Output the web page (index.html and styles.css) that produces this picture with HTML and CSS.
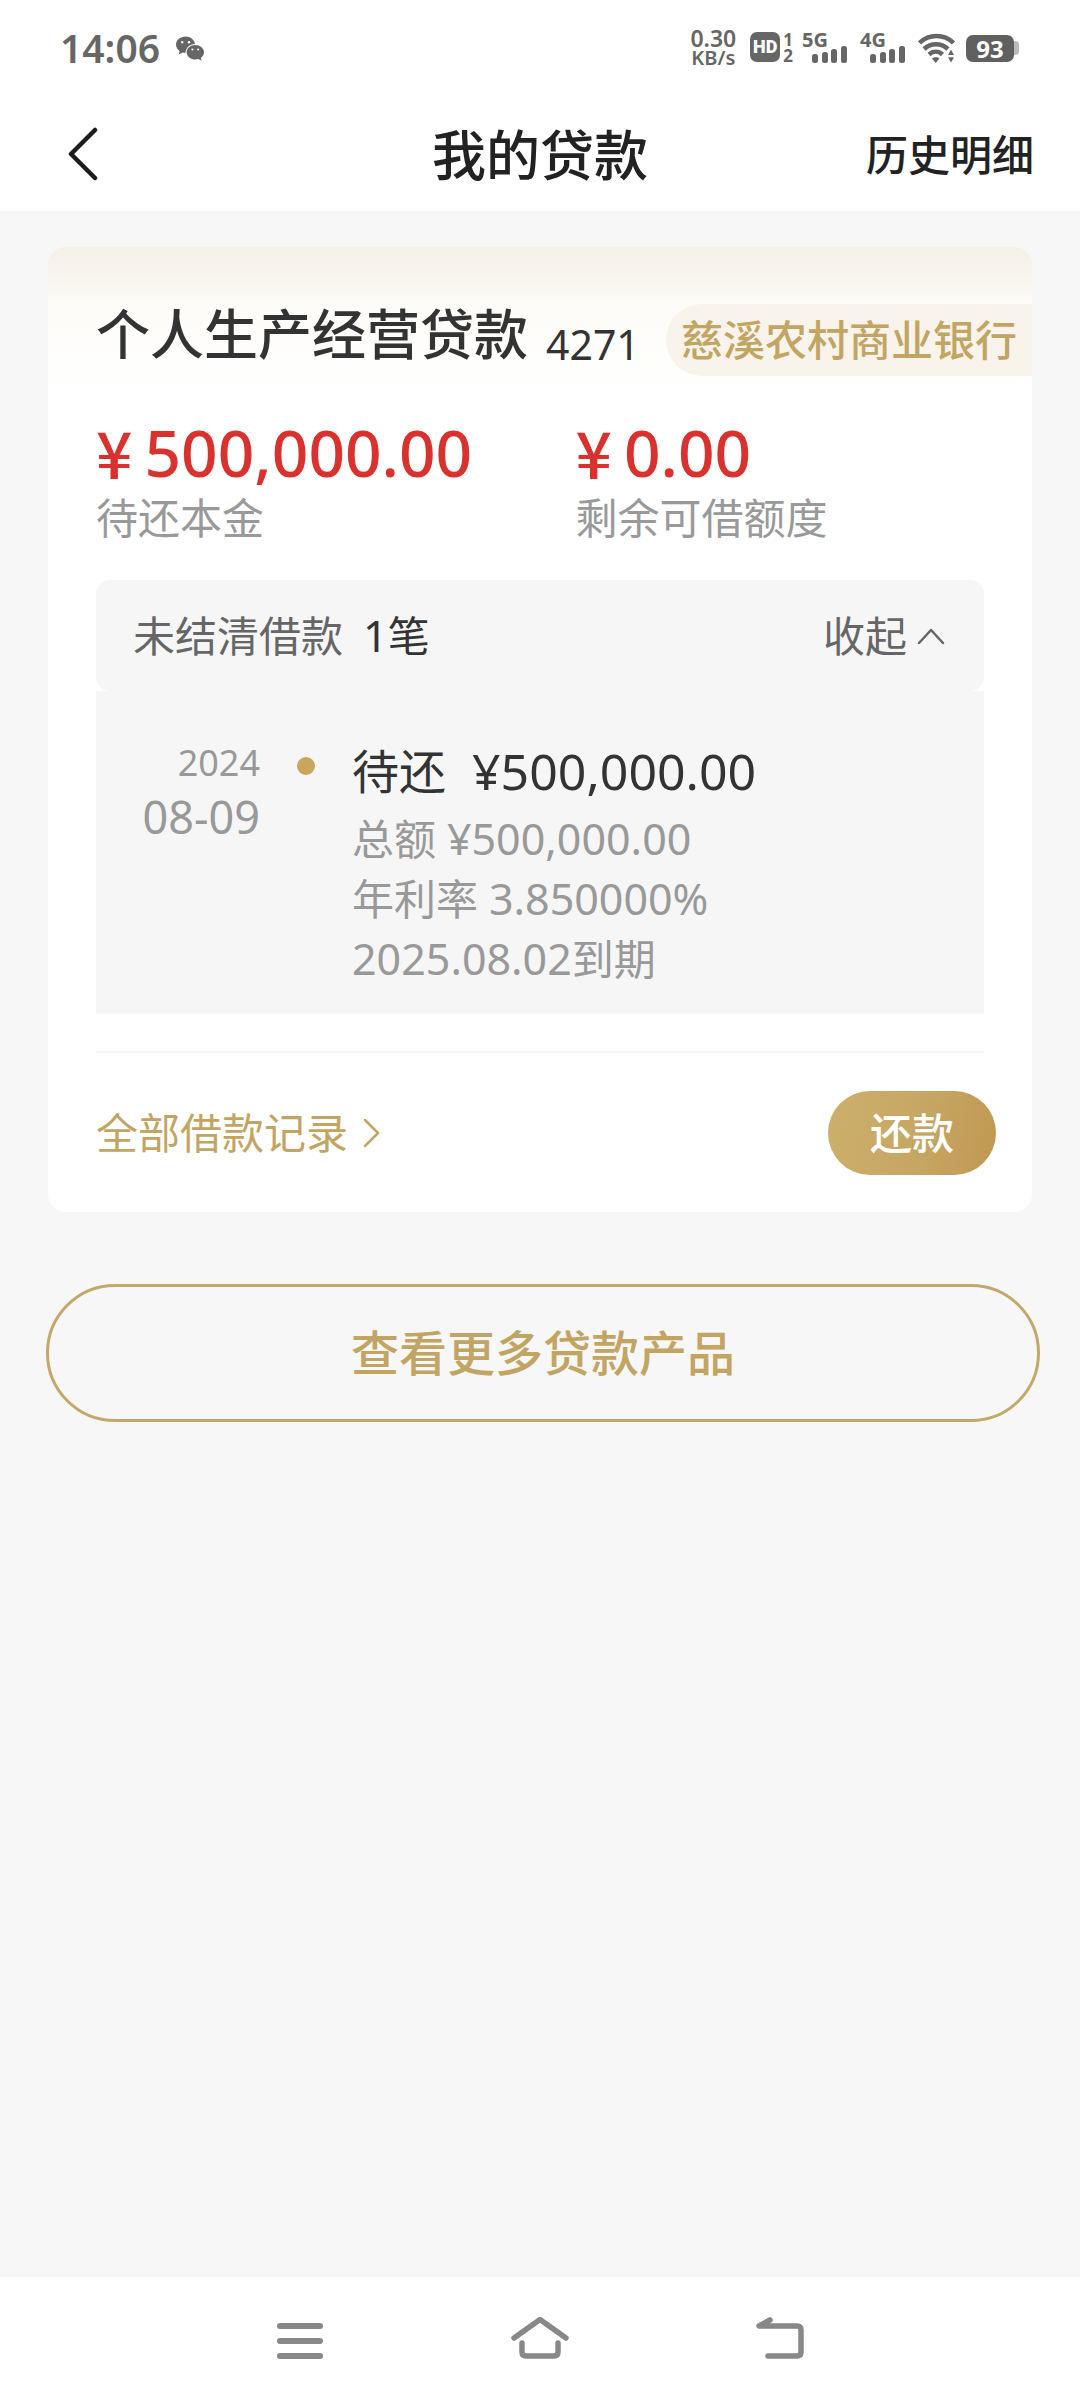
FILE: index.html
```html
<!DOCTYPE html>
<html lang="zh-CN">
<head>
<meta charset="utf-8">
<meta name="viewport" content="width=device-width, initial-scale=1">
<title>我的贷款</title>
<link rel="stylesheet" href="styles.css">
</head>
<body>
<div class="status-bar">
  <div class="status-left">
    <span class="clock">14:06</span>
    <svg class="wechat" width="28" height="25" viewBox="0 0 28 25" aria-hidden="true">
      <path d="M9.500 .5C4.300.500 0 4.100 0 8.600c0 2.600 1.400 4.900 3.600 6.400L2.800 18.500l4.200-2.100c.8.200 1.700.300 2.500.3C9.800 11.500 14 7.800 19 7.900 18.300 3.700 14.300.500 9.500.500z" fill="#666"/>
      <path d="M19.300 8.900c-4.900 0-8.700 3.300-8.700 7.300s3.900 7.300 8.700 7.300c1 0 2-.200 2.900-.4l3.500 1.700-.9-2.900c2-1.300 3.200-3.400 3.200-5.700 0-4-3.900-7.300-8.700-7.300z" fill="#666"/>
      <g fill="#fff"><circle cx="6.200" cy="6.300" r="1.200"/><circle cx="13" cy="6.300" r="1.200"/><circle cx="16.400" cy="13.500" r="1"/><circle cx="22.200" cy="13.500" r="1"/></g>
    </svg>
  </div>
  <div class="status-right">
    <div class="speed"><span>0.30</span><span class="speed-unit">KB/s</span></div>
    <div class="hd"><span class="hd-box">HD</span><span class="hd-nums"><span>1</span><span>2</span></span></div>
    <div class="signal"><span>5G</span>
      <svg width="36" height="17" viewBox="0 0 36 17" fill="#666" aria-hidden="true"><rect y="8" width="6" height="9" rx="2.500"/><rect x="10" y="6" width="6" height="11" rx="2.500"/><rect x="19" y="3" width="6" height="14" rx="2.500"/><rect x="29" width="6" height="17" rx="2.500"/></svg>
    </div>
    <div class="signal"><span>4G</span>
      <svg width="36" height="17" viewBox="0 0 36 17" fill="#666" aria-hidden="true"><rect y="8" width="6" height="9" rx="2.500"/><rect x="10" y="6" width="6" height="11" rx="2.500"/><rect x="19" y="3" width="6" height="14" rx="2.500"/><rect x="29" width="6" height="17" rx="2.500"/></svg>
    </div>
    <svg class="wifi" width="37" height="30" viewBox="0 0 37 30" aria-hidden="true">
      <g fill="none" stroke="#666" stroke-width="4.500"><path d="M1.500 10C11 .8 26 .8 35.500 10"/><path d="M6 16c7-6.500 17-6.500 24 0"/><path d="M11 21.500c4-3.700 9.500-3.700 13.500 0"/></g>
      <path d="M14 25.500c2-1.700 5.500-1.700 7.500 0L17.700 30zM30 22l3-5.500 3 5.500zM30 24.200h6l-3 5.300z" fill="#666"/>
    </svg>
    <div class="battery"><span>93</span></div>
  </div>
</div>

<header class="top-bar">
  <button class="back" type="button" aria-label="返回">
    <svg width="32" height="56" viewBox="0 0 32 56" fill="none" stroke="#1c1c1c" stroke-width="4.500" stroke-linecap="round" stroke-linejoin="round" aria-hidden="true"><path d="M29 3 5 27l24 24"/></svg>
  </button>
  <h1>我的贷款</h1>
  <a class="history" href="#">历史明细</a>
</header>

<main>
  <section class="card">
    <div class="card-head">
      <h2>个人生产经营贷款</h2>
      <span class="card-no">4271</span>
      <span class="bank">慈溪农村商业银行</span>
    </div>
    <div class="amounts">
      <div>
        <div class="amount"><span class="yen">¥</span><span>500,000.00</span></div>
        <div class="amount-label">待还本金</div>
      </div>
      <div>
        <div class="amount"><span class="yen">¥</span><span>0.00</span></div>
        <div class="amount-label">剩余可借额度</div>
      </div>
    </div>
    <div class="loans">
      <div class="loans-head">
        <span>未结清借款</span>
        <span class="count"><span class="num">1</span>笔</span>
        <button class="fold" type="button">收起
          <svg width="28" height="18" viewBox="0 0 28 18" fill="none" stroke="#666" stroke-width="2.500" stroke-linecap="round" stroke-linejoin="round" aria-hidden="true"><path d="M2 16 14 3l12 13"/></svg>
        </button>
      </div>
      <div class="loan">
        <div class="date"><div class="year">2024</div><div class="day">08-09</div></div>
        <span class="dot"></span>
        <div class="detail">
          <div class="due"><span>待还</span><span class="due-num">¥500,000.00</span></div>
          <div>总额 <span class="num">¥500,000.00</span></div>
          <div>年利率 <span class="num">3.850000%</span></div>
          <div><span class="num">2025.08.02</span>到期</div>
        </div>
      </div>
    </div>
    <div class="card-foot">
      <a class="records" href="#">全部借款记录
        <svg width="18" height="30" viewBox="0 0 18 30" fill="none" stroke="#c3a563" stroke-width="2.500" stroke-linecap="round" stroke-linejoin="round" aria-hidden="true"><path d="M2 2l13 13L2 28"/></svg>
      </a>
      <button class="repay" type="button">还款</button>
    </div>
  </section>
  <button class="more" type="button">查看更多贷款产品</button>
</main>

<nav class="sys-nav">
  <button type="button" aria-label="最近任务"><svg width="60" height="48" viewBox="0 0 60 48" fill="none" stroke="#888" stroke-width="6" stroke-linecap="round"><path d="M10 9h40M10 24h40M10 39h40"/></svg></button>
  <button type="button" aria-label="主屏幕"><svg width="60" height="48" viewBox="0 0 60 48" fill="none" stroke="#888" stroke-width="5.500" stroke-linecap="round" stroke-linejoin="round"><path d="M4 21 30 2.500 56 21M12 26v9q0 4 4 4h28q4 0 4-4v-9"/></svg></button>
  <button type="button" aria-label="返回上一页"><svg width="60" height="48" viewBox="0 0 60 48" fill="none" stroke="#888" stroke-width="5.500" stroke-linecap="round" stroke-linejoin="round"><path d="M20 3 9 9h38q4 0 4 4v22q0 4-4 4H18"/></svg></button>
</nav>
</body>
</html>
```
FILE: styles.css
```css
* { box-sizing: border-box; }

body {
  margin: 0;
  min-height: 100vh;
  display: flex;
  flex-direction: column;
  background: #f7f7f7;
  color: #333;
  font-family: "Noto Sans", "Noto Sans CJK SC", sans-serif;
  font-size: 42px;
  line-height: 60px;
}

h1, h2 { margin: 0; font-weight: 500; font-size: 54px; }

button {
  border: 0;
  padding: 0;
  background: none;
  color: inherit;
  font: inherit;
}

a { color: inherit; text-decoration: none; }

svg { display: block; flex: none; }

/* status bar */
.status-bar {
  display: flex;
  justify-content: space-between;
  align-items: center;
  height: 96px;
  padding: 0 61px 0 60px;
  background: #fff;
  color: #666;
}

.status-left, .status-right { display: flex; align-items: center; }

.status-left { gap: 16px; }

.clock { font-size: 39px; font-weight: 600; }

.speed {
  display: flex;
  flex-direction: column;
  align-items: center;
  margin-right: 14px;
  font-size: 23px;
  line-height: 20px;
  font-weight: 600;
}

.speed-unit { font-size: 20px; }

.hd { display: flex; gap: 3px; margin-right: 9px; }

.hd-box {
  width: 30px;
  height: 30px;
  border-radius: 7px;
  background: #666;
  color: #fff;
  font-family: Roboto, sans-serif;
  font-size: 18px;
  line-height: 30px;
  font-weight: 900;
  text-align: center;
}

.hd-nums {
  display: flex;
  flex-direction: column;
  font-size: 17px;
  line-height: 16px;
  font-weight: 700;
}

.signal {
  display: flex;
  flex-direction: column;
  width: 46px;
  height: 30px;
  margin-right: 12px;
  font-size: 20px;
  line-height: 14px;
  font-weight: 700;
}

.signal svg { margin: -1px 0 0 10px; }

.wifi { margin-right: 11px; }

.battery {
  display: flex;
  align-items: center;
}

.battery span {
  width: 48px;
  height: 27px;
  border-radius: 7px;
  background: #606060;
  color: #fff;
  font-size: 24px;
  line-height: 27px;
  font-weight: 700;
  text-align: center;
}

.battery::after {
  content: "";
  width: 5px;
  height: 14px;
  border-radius: 0 4px 4px 0;
  background: #bbb;
}

/* title bar */
.top-bar {
  display: grid;
  grid-template-columns: 1fr auto 1fr;
  align-items: center;
  height: 115px;
  padding: 3px 46px 0 66px;
  background: #fff;
  color: #222;
}

.top-bar h1 { padding-right: 20px; }

.history { justify-self: end; font-weight: 500; }

/* loan card */
main {
  flex: 1;
  padding: 36px 40px 48px 46px;
}

.card {
  margin: 0 8px 0 2px;
  border-radius: 18px;
  background: linear-gradient(#f6f1e6 0, #f8f4ed 30px, #fdfcf8 60px, #fff 150px);
  overflow: hidden;
}

.card-head {
  display: flex;
  align-items: flex-start;
  padding: 57px 0 0 48px;
}

.card-no { margin-left: 18px; font-size: 41px; line-height: 80px; }

.bank {
  margin-left: auto;
  padding: 0 15px;
  border-radius: 36px 0 0 36px;
  background: #f8f4ec;
  color: #c3a563;
  font-weight: 500;
  line-height: 72px;
}

.amounts {
  display: grid;
  grid-template-columns: 54% 1fr;
  padding: 29px 48px 0;
}

.amount {
  display: flex;
  gap: 12px;
  color: #d9322e;
  font-size: 64px;
  line-height: 80px;
  font-weight: 500;
}

.yen { font-family: "Noto Sans CJK SC", sans-serif; line-height: 76px; }

.amount-label { color: #999; line-height: 50px; }

.loans { margin: 37px 48px 0; }

.loans-head {
  display: flex;
  align-items: center;
  height: 111px;
  padding: 0 39px 0 37px;
  border-radius: 14px;
  background: #f6f6f6;
  color: #666;
}

.num { font-size: 43px; line-height: 1; }

.count { margin-left: 20px; color: #333; }

.fold {
  display: flex;
  align-items: center;
  gap: 10px;
  margin-left: auto;
}

.loan {
  display: grid;
  grid-template-columns: 164px 18px 1fr;
  column-gap: 37px;
  padding: 48px 0 25px;
  background: #f6f6f6;
  color: #999;
}

.date { text-align: right; }

.year { font-size: 36px; line-height: 48px; }

.day { font-size: 45px; }

.dot {
  width: 18px;
  height: 18px;
  margin-top: 18px;
  border-radius: 50%;
  background: #c9a55d;
}

.due {
  display: flex;
  gap: 26px;
  margin-bottom: 6px;
  color: #333;
  font-size: 47px;
  line-height: 64px;
}

.due-num { font-size: 50px; }

.card-foot {
  display: flex;
  justify-content: space-between;
  align-items: center;
  margin: 37px 48px 0;
  padding: 38px 0 37px;
  border-top: 2px solid #f6f6f6;
  color: #c3a563;
}

.records { display: flex; align-items: center; gap: 15px; }

.repay {
  width: 168px;
  height: 84px;
  margin-right: -12px;
  border-radius: 42px;
  background: linear-gradient(100deg, #cdb06c, #c5a562 60%, #c09850);
  color: #fff;
  font-weight: 500;
}

.more {
  width: 100%;
  height: 138px;
  margin-top: 72px;
  border: 3px solid #c3a969;
  border-radius: 69px;
  color: #c3a563;
  font-size: 48px;
  font-weight: 500;
}

/* system navigation */
.sys-nav {
  display: grid;
  grid-template-columns: repeat(3, 1fr);
  height: 127px;
  padding: 0 180px;
  background: #fff;
}

.sys-nav button { display: grid; place-items: center; }
```
